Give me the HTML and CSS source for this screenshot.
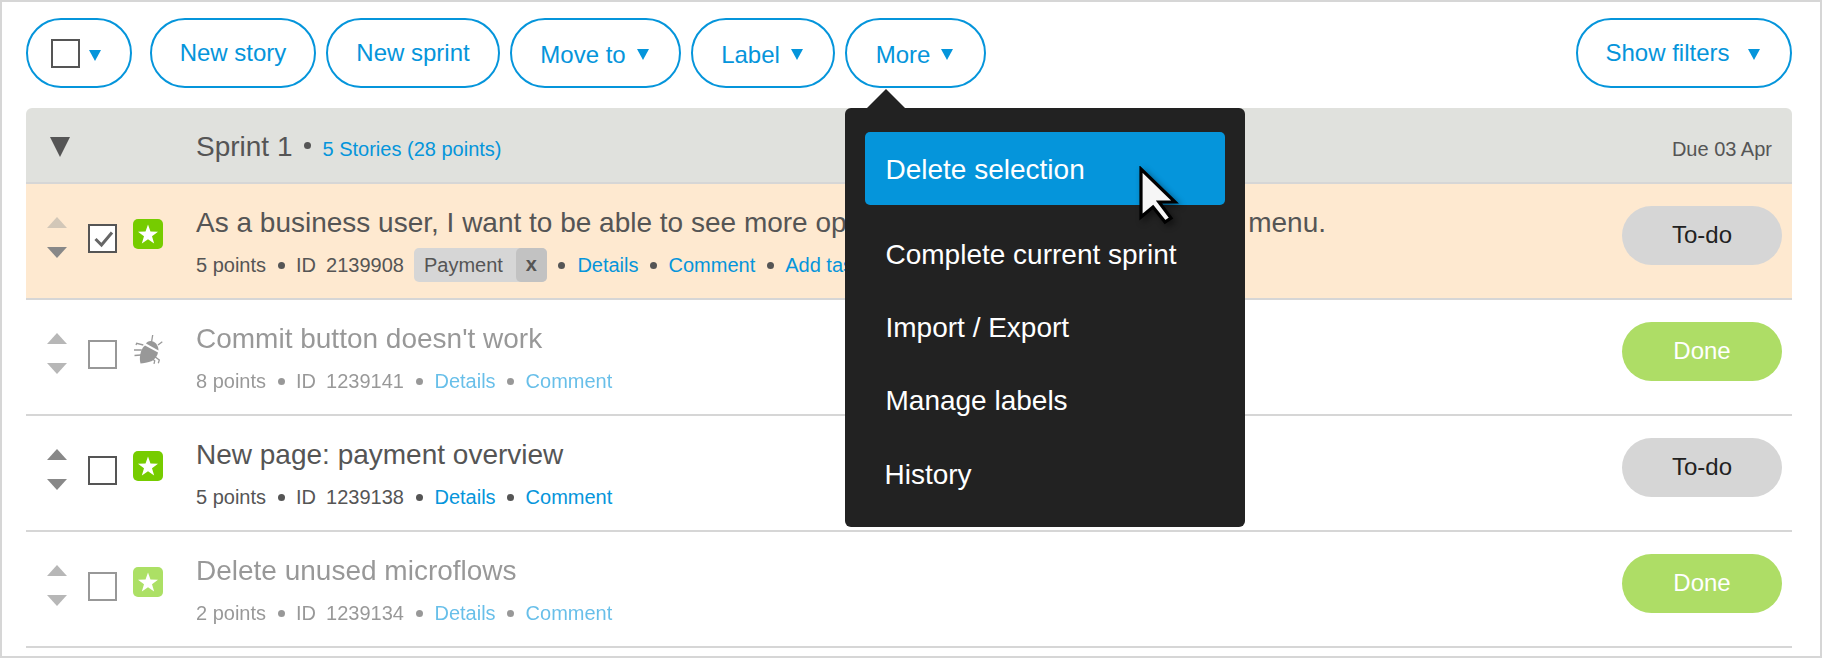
FILE: index.html
```html
<!DOCTYPE html>
<html lang="en">
<head>
<meta charset="utf-8">
<title>Sprint backlog</title>
<link rel="stylesheet" href="styles.css">
</head>
<body>
<div class="frame">
  <div class="toolbar">
    <button class="btn btn-select"><span class="box"></span><span class="caret"></span></button>
    <button class="btn btn-plain">New story</button>
    <button class="btn btn-plain">New sprint</button>
    <button class="btn btn-drop">Move to<span class="caret"></span></button>
    <button class="btn btn-drop">Label<span class="caret"></span></button>
    <button class="btn btn-drop">More<span class="caret"></span></button>
    <button class="btn btn-filter">Show filters<span class="caret"></span></button>
  </div>

  <div class="sprint">
    <span class="sprint-caret"></span>
    <span class="sprint-name">Sprint 1</span>
    <span class="dot sprint-dot"></span>
    <a class="link sprint-count">5 Stories (28 points)</a>
    <span class="due">Due 03 Apr</span>
  </div>

  <div class="row row-selected">
    <div class="row-main">
      <div class="arrows"><span class="up up-dim"></span><span class="down"></span></div>
      <span class="box box-checked"><svg viewBox="0 0 26 26" width="26" height="26"><path d="M4.500 13 10.500 19 21 6.500" fill="none" stroke="#666" stroke-width="3"/></svg></span>
      <span class="type-star"><svg viewBox="0 0 30 30" width="30" height="30"><path d="M15 5.500 17.470 12.600 25 12.760 19 17.300 21.170 24.500 15 20.200 8.830 24.500 11 17.300 5 12.760 12.530 12.600z" fill="#fff"/></svg></span>
      <div class="story">
        <div class="title">As a business user, I want to be able to see more options in the action set dropdown menu.</div>
        <div class="meta">5 points<span class="dot"></span>ID<span class="id">2139908</span><span class="tag">Payment<span class="tag-x">x</span></span><span class="dot dot-tag"></span><a class="link">Details</a><span class="dot"></span><a class="link">Comment</a><span class="dot"></span><a class="link">Add task</a></div>
      </div>
    </div>
    <span class="status status-todo">To-do</span>
  </div>

  <div class="row">
    <div class="row-main row-faded">
      <div class="arrows"><span class="up"></span><span class="down"></span></div>
      <span class="box"></span>
      <span class="type-bug"><svg viewBox="0 0 30 30" width="30" height="30"><g fill="none" stroke="#555" stroke-width="1.300"><path d="M18.700 6 19.700 0M25 10l4.300-3.300M10.300 10 3.700 8.300 3 10M8.700 15H1M8 20 1.500 20.500M22 21.700l4.300 3.300-1 3.300M18.700 23.300l3 2.500-.7 3"/></g><path d="M12 10.500 25 17.500C24.500 21 22 24 19 26 15 27.500 10 28.500 7.500 28.500 6 24 7 14 12 10.500z" fill="#555"/><path d="M13 8.500C14 6.500 17 5.500 20 6.500 23 7.500 25.500 11 25.500 15.500z" fill="#555"/></svg></span>
      <div class="story">
        <div class="title">Commit button doesn't work</div>
        <div class="meta">8 points<span class="dot"></span>ID<span class="id">1239141</span><span class="dot"></span><a class="link">Details</a><span class="dot"></span><a class="link">Comment</a></div>
      </div>
    </div>
    <span class="status status-done">Done</span>
  </div>

  <div class="row">
    <div class="row-main">
      <div class="arrows"><span class="up"></span><span class="down"></span></div>
      <span class="box"></span>
      <span class="type-star"><svg viewBox="0 0 30 30" width="30" height="30"><path d="M15 5.500 17.470 12.600 25 12.760 19 17.300 21.170 24.500 15 20.200 8.830 24.500 11 17.300 5 12.760 12.530 12.600z" fill="#fff"/></svg></span>
      <div class="story">
        <div class="title">New page: payment overview</div>
        <div class="meta">5 points<span class="dot"></span>ID<span class="id">1239138</span><span class="dot"></span><a class="link">Details</a><span class="dot"></span><a class="link">Comment</a></div>
      </div>
    </div>
    <span class="status status-todo">To-do</span>
  </div>

  <div class="row">
    <div class="row-main row-faded">
      <div class="arrows"><span class="up"></span><span class="down"></span></div>
      <span class="box"></span>
      <span class="type-star"><svg viewBox="0 0 30 30" width="30" height="30"><path d="M15 5.500 17.470 12.600 25 12.760 19 17.300 21.170 24.500 15 20.200 8.830 24.500 11 17.300 5 12.760 12.530 12.600z" fill="#fff"/></svg></span>
      <div class="story">
        <div class="title">Delete unused microflows</div>
        <div class="meta">2 points<span class="dot"></span>ID<span class="id">1239134</span><span class="dot"></span><a class="link">Details</a><span class="dot"></span><a class="link">Comment</a></div>
      </div>
    </div>
    <span class="status status-done">Done</span>
  </div>

  <div class="menu">
    <span class="menu-arrow"></span>
    <div class="menu-item menu-item-active">Delete selection</div>
    <div class="menu-item">Complete current sprint</div>
    <div class="menu-item">Import / Export</div>
    <div class="menu-item">Manage labels</div>
    <div class="menu-item menu-item-last">History</div>
  </div>

  <svg class="cursor" viewBox="0 0 44 62" width="44" height="62"><path d="M3 3v48l12-10 12 15 6-4-12-16h16z" fill="#f6f6f6" stroke="#000" stroke-width="3.200" stroke-linejoin="miter"/></svg>
</div>
</body>
</html>
```
FILE: styles.css
```css
* { box-sizing: border-box; }
html, body { margin: 0; padding: 0; background: #fff; }
body { font-family: "Liberation Sans", Arial, sans-serif; color: #555; width: 1822px; height: 659px; overflow: hidden; }
.frame { position: relative; width: 1822px; height: 658px; border: 2px solid #d6d6d6; padding: 16px 28px 0 24px; background: #fff; }

.toolbar { display: flex; gap: 10px; height: 70px; margin-bottom: 20px; }
.btn { display: flex; align-items: center; justify-content: center; height: 70px; border: 2px solid #0595db; border-radius: 35px; background: #fff; color: #0595db; font: 24px/26px "Liberation Sans", Arial, sans-serif; padding: 0; }
.btn-select { width: 106px; margin-right: 8px; gap: 9px; padding-right: 7px; }
.btn-plain { padding-bottom: 1px; }
.btn-plain:nth-child(2) { width: 166px; }
.btn-plain:nth-child(3) { width: 174px; }
.btn-drop { padding-top: 3px; padding-right: 2px; gap: 11px; }
.btn-drop:nth-child(4) { width: 171px; }
.btn-drop:nth-child(5) { width: 144px; }
.btn-drop:nth-child(6) { width: 141px; }
.btn-filter { width: 216px; margin-left: auto; gap: 18px; padding-bottom: 1px; padding-right: 3px; }
.caret { width: 0; height: 0; border-left: 6px solid transparent; border-right: 6px solid transparent; border-top: 11px solid #0595db; }
.btn-drop .caret { margin-top: 0; }
.btn-select .caret { margin-top: 4px; }
.btn-filter .caret { margin-top: 3px; }

.sprint { display: flex; align-items: center; height: 76px; background: #e0e1dd; border-bottom: 2px solid #d6d6d6; border-radius: 6px 6px 0 0; padding: 0 20px 0 24px; }
.sprint-caret { width: 0; height: 0; border-left: 10px solid transparent; border-right: 10px solid transparent; border-top: 20px solid #555; margin-right: 126px; margin-top: 3px; }
.sprint-name { font-size: 28px; line-height: 32px; margin-top: 4px; }
.sprint-dot { margin: 12px 10px 0 10px; }
.sprint-count { font-size: 20px; margin-top: 8px; }
.due { margin-left: auto; font-size: 20px; margin-top: 8px; }

.dot { display: block; width: 7px; height: 7px; border-radius: 50%; background: #555; margin: 0 11.500px; flex: none; }
.link { color: #0595db; text-decoration: none; }

.row { display: flex; justify-content: space-between; height: 116px; border-bottom: 2px solid #d6d6d6; padding: 22px 10px 0 21px; }
.row-selected { background: #fee9d0; }
.row-main { display: flex; align-items: flex-start; flex: 1; min-width: 0; }
.row-faded { opacity: .6; }

.arrows { display: flex; flex-direction: column; gap: 19px; width: 21px; margin-top: 11px; margin-right: 20px; }
.up { display: block; width: 0; height: 0; border-left: 10.500px solid transparent; border-right: 10.500px solid transparent; border-bottom: 11px solid #888; }
.up-dim { border-bottom-color: #d2c7b8; }
.down { display: block; width: 0; height: 0; border-left: 10.500px solid transparent; border-right: 10.500px solid transparent; border-top: 11px solid #888; }

.box { display: block; width: 29px; height: 29px; border: 2px solid #555; background: #fff; flex: none; }
.row-main > .box { margin-top: 18px; margin-right: 16px; }
.box-checked svg { display: block; margin: 0 0 0 .5px; }

.type-star { width: 30px; height: 30px; background: #76cc00; border-radius: 5px; margin-top: 13px; flex: none; }
.type-bug { width: 30px; height: 30px; margin-top: 13px; flex: none; }
.type-star svg, .type-bug svg { display: block; }

.story { margin-left: 33px; }
.title { font-size: 28px; line-height: 30px; white-space: nowrap; margin-top: 2px; }
.meta { display: flex; align-items: center; height: 34px; font-size: 20px; margin-top: 10px; white-space: nowrap; }
.meta .dot { margin-top: 1px; }
.id { margin-left: 10px; margin-right: 10px; }
.id + .dot { margin-left: 2px; }
.tag { display: flex; align-items: center; height: 34px; background: #d6d6d6; border-radius: 5px; padding-left: 10px; }
.tag-x { display: block; width: 31px; height: 34px; margin-left: 13px; line-height: 33px; text-align: center; font-weight: bold; background: #c2c2c2; border-radius: 5px; }
.meta .dot-tag { margin-left: 11px; margin-right: 12.500px; }

.status { display: block; width: 160px; height: 59px; border-radius: 30px; text-align: center; font-size: 24px; line-height: 57px; flex: none; }
.status-todo { background: #d6d6d6; color: #222; }
.status-done { background: #aedd66; color: #fff; }

.menu { position: absolute; left: 843px; top: 106px; width: 400px; height: 419px; background: #222; border-radius: 6px; padding: 24px 20px 0; }
.menu-arrow { position: absolute; left: 21px; top: -19px; width: 0; height: 0; border-left: 20px solid transparent; border-right: 20px solid transparent; border-bottom: 20px solid #222; }
.menu-item { height: 73px; line-height: 78px; padding-left: 20.500px; color: #fff; font-size: 28px; white-space: nowrap; }
.menu-item-active { background: #0595db; border-radius: 5px; margin-bottom: 11px; line-height: 76px; }
.menu-item-last { padding-left: 19.500px; line-height: 80px; }

.cursor { position: absolute; left: 1136px; top: 164px; filter: drop-shadow(3px 3px 3px rgba(0,0,0,.45)); }
```
